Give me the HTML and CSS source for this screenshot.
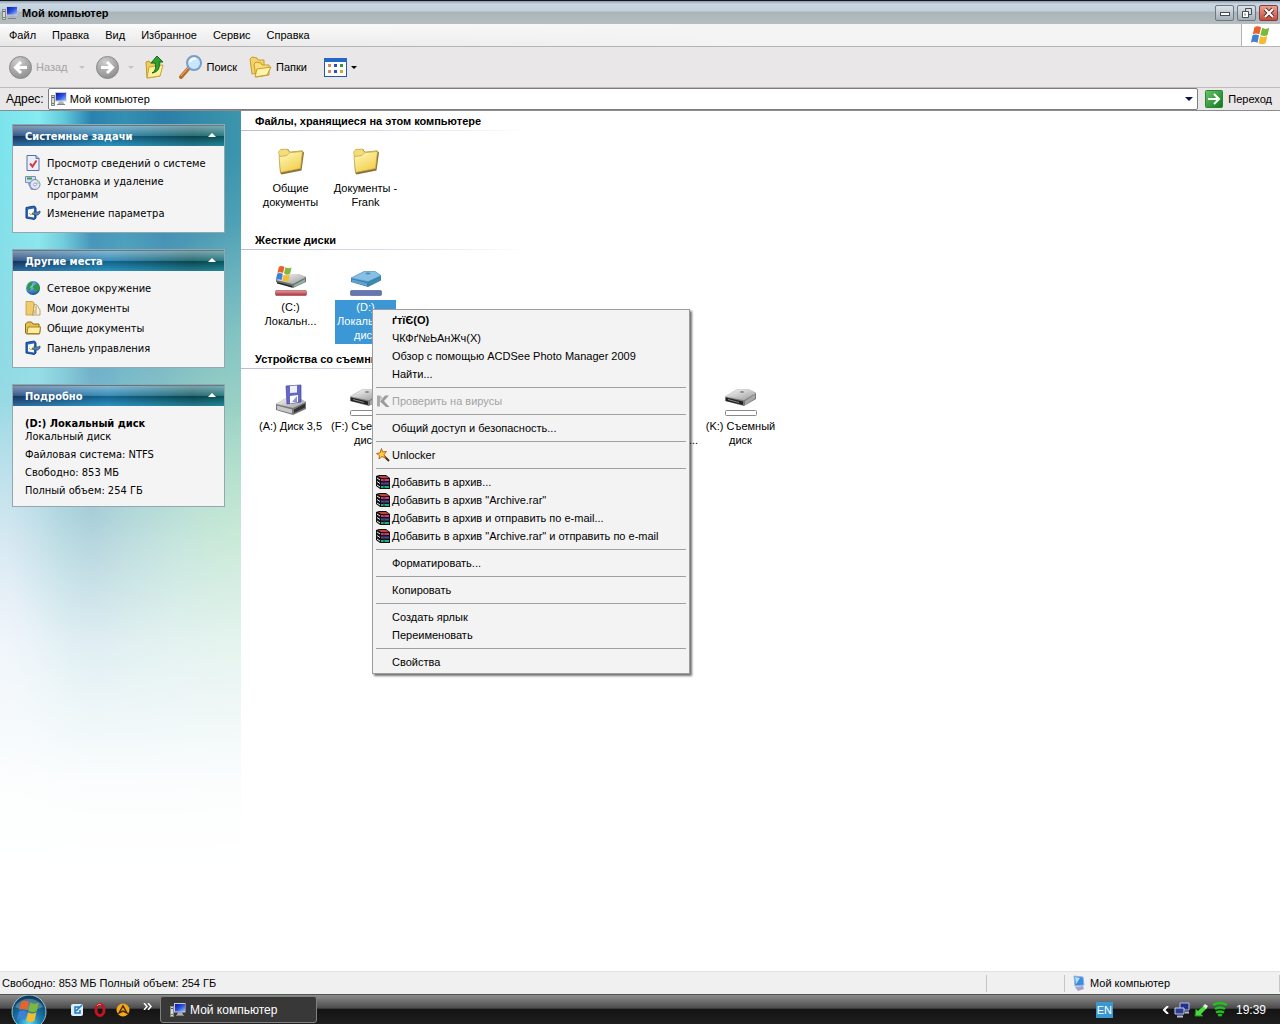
FILE: index.html
```html
<!DOCTYPE html>
<html lang="ru">
<head>
    <meta charset="UTF-8">
    <meta name="viewport" content="width=device-width, initial-scale=1.0">
    <title>Мой компьютер</title>
    <link rel="stylesheet" href="styles.css">
</head>
<body>
    <!-- Shared icons -->
    <svg class="sprite" aria-hidden="true">
        <defs>
            <linearGradient id="gFolder" x1="0" y1="0" x2="0.6" y2="1"><stop offset="0" stop-color="#fffbc0"/><stop offset="1" stop-color="#f3cf4e"/></linearGradient>
            <linearGradient id="gScreen" x1="0" y1="0" x2="1" y2="1"><stop offset="0" stop-color="#0818a0"/><stop offset="0.5" stop-color="#2a50e0"/><stop offset="1" stop-color="#9cc4ff"/></linearGradient>
            <linearGradient id="gMetal" x1="0" y1="0" x2="1" y2="1"><stop offset="0" stop-color="#fafafa"/><stop offset="1" stop-color="#9a9a9a"/></linearGradient>
            <linearGradient id="gRed" x1="0" y1="0" x2="0" y2="1"><stop offset="0" stop-color="#e89a9e"/><stop offset="1" stop-color="#b02c38"/></linearGradient>
            <linearGradient id="gGreen" x1="0" y1="0" x2="1" y2="1"><stop offset="0" stop-color="#6cc46a"/><stop offset="1" stop-color="#0c7a1c"/></linearGradient>
            <radialGradient id="gGrey" cx="0.4" cy="0.25" r="0.8"><stop offset="0" stop-color="#cfcfcf"/><stop offset="1" stop-color="#8b8b8b"/></radialGradient>
            <radialGradient id="gOrb" cx="0.5" cy="0.85" r="0.85"><stop offset="0" stop-color="#5fe0f8"/><stop offset="0.4" stop-color="#1c7cb0"/><stop offset="1" stop-color="#0b3656"/></radialGradient>
            <radialGradient id="gGlobe" cx="0.35" cy="0.3" r="0.8"><stop offset="0" stop-color="#8fd0ff"/><stop offset="1" stop-color="#0a3f9c"/></radialGradient>
        </defs>
        <symbol id="computer" viewBox="0 0 16 16">
            <rect x="0.5" y="4.5" width="3" height="10" fill="#d8d8d8" stroke="#8a8a8a"/>
            <path d="M1 6.5h2" stroke="#555"/><path d="M1 12.5h2" stroke="#3a3"/>
            <path d="M4 1h11.500v9.500h-11.500z" fill="#c9c9d4"/>
            <path d="M5 2h10v7.500h-10z" fill="url(#gScreen)"/>
            <path d="M8 10.500h4l1.500 3h-7z" fill="#b0b0b8"/><path d="M6 13.500h8" stroke="#808088"/>
        </symbol>
        <symbol id="flag" viewBox="0 0 20 18">
            <path d="M4 2c2-1.500 4-1 6 0l-1.500 6.500c-2-1-4-1.500-6 0z" fill="#e8622c"/>
            <path d="M11 2.500c2 1 4 1.500 6.500 0l-1.500 6.500c-2 1.500-4 1-6.500 0z" fill="#7cb83c"/>
            <path d="M2.200 9.500c2-1.500 4-1 6 0l-1.400 6.500c-2-1-4-1.500-6 0z" fill="#3f7fd6"/>
            <path d="M9.200 10c2 1 4 1.500 6.500 0l-1.500 6.500c-2 1.500-4 1-6.400 0z" fill="#f5bd2e"/>
        </symbol>
        <symbol id="folder" viewBox="0 0 32 32">
            <path d="M4 6l2-2.500 7-.5 2 3 12-1.500 2 2-2.500 18-20 4-1.500-2z" fill="#8a7038"/>
            <path d="M3.500 6l2-2.500 6.500-.5 2.500 3 12-1v3l-22 3z" fill="#f3dc7a" stroke="#c6a440" stroke-width="0.600"/>
            <path d="M4 10.500l7.500-.8 3-3 13-1.200-2 17-20 4z" fill="url(#gFolder)" stroke="#c6a440" stroke-width="0.700"/>
        </symbol>
        <symbol id="folderSmall" viewBox="0 0 16 16">
            <path d="M0.500 13V4l2-2h4l1.500 2H14v3h1.500l-1 7H2z" fill="#e8c04c" stroke="#8c6c18"/>
            <path d="M3 7h12.500l-1 6.500H2z" fill="#ffee9c" stroke="#a8842c"/>
        </symbol>
        <symbol id="myDocs" viewBox="0 0 16 16">
            <path d="M1 1.500h6l2 1v12.500H1z" fill="#f0cc6c" stroke="#c09a3c" stroke-width="0.800"/>
            <path d="M9.500 4l2.500 1 3 5v5H7.500z" fill="#f6f2e4" stroke="#a88c50" stroke-width="0.800"/>
            <path d="M11 6v8M9 10v4" stroke="#c09a3c"/>
        </symbol>
        <symbol id="globe" viewBox="0 0 16 16">
            <circle cx="8" cy="8" r="7" fill="url(#gGlobe)"/>
            <path d="M3 4c2-2.500 4-2.500 5-2l-1 3-2 2 1 2-2 2-2-3zM9 5l4-1 1.500 4-2 4-3 1 0-4-2-2z" fill="#2f9c3c"/>
        </symbol>
        <symbol id="control" viewBox="0 0 16 16">
            <path d="M1 2.500L9.500 1l1.500 2v10l-1.500 1.500L1 13z" fill="#2a66b8" stroke="#173f80"/>
            <path d="M3 4.500l6-1v9l-6-1z" fill="#f2f8ff"/>
            <path d="M4 8l2 2 3-4" fill="none" stroke="#e2b028"/>
            <path d="M7 9l3-2h3l2-1v2l-2 2h-3z" fill="#5c84b4" stroke="#204870" stroke-width="0.700"/>
        </symbol>
        <symbol id="sysInfo" viewBox="0 0 16 16">
            <path d="M2 .5h9l3 3v12H2z" fill="#e8f0ff" stroke="#5a70a4"/>
            <path d="M11 .5v3h3" fill="#b8c8e8" stroke="#5a70a4"/>
            <path d="M5 8.500l2.500 3 4-6" fill="none" stroke="#e03838" stroke-width="2"/>
        </symbol>
        <symbol id="programs" viewBox="0 0 16 16">
            <path d="M0.500 1.500h10v6H0.500z" fill="#cfe0f4" stroke="#7890b8"/><path d="M2 3.500h5" stroke="#3c9c4c" stroke-width="2"/>
            <path d="M2 7l4 8 5 0-3-8z" fill="#8ca4cc"/>
            <circle cx="10" cy="9.500" r="5" fill="#e4e4f6" stroke="#7c84ac"/>
            <path d="M10 9.500l3-4a5 5 0 0 1 1.600 3z" fill="#a4e0b0"/><circle cx="10" cy="9.500" r="1.400" fill="#fff" stroke="#7c84ac" stroke-width="0.700"/>
        </symbol>
        <symbol id="drive" viewBox="0 0 32 20">
            <path d="M0 8L12 1h12l7 3v6l-12 7L0 12z" fill="#777"/>
            <path d="M0 7.500L12 .5h12l7 3.500-12 7z" fill="url(#gMetal)" stroke="#bbb" stroke-width="0.500"/>
            <path d="M1 8.500l17 4v3.500L1 12z" fill="#222"/><path d="M20 12l10-6.500v4l-10 6.500z" fill="#a8a8a8"/>
            <path d="M3 10.500l11 3" stroke="#888"/><ellipse cx="17" cy="3" rx="2" ry="1" fill="#888"/>
        </symbol>
        <symbol id="diskC" viewBox="0 0 32 32">
            <path d="M1 15L12 9h11l8 3v5l-13 6-17-6z" fill="#6c7270"/>
            <path d="M1 15L12 9h11l8 3-13 7z" fill="url(#gMetal)"/>
            <path d="M2 17l15 4v1.500L2 18.500z" fill="#222"/><path d="M19 20l11-6v3l-11 5z" fill="#8ab4a0"/>
            <use href="#flag" x="0" y="0" width="19" height="17"/>
            <rect x="0.500" y="25.500" width="31" height="5" rx="1" fill="url(#gRed)" stroke="#8c5054" stroke-width="0.600"/>
        </symbol>
        <symbol id="diskD" viewBox="0 0 32 32">
            <path d="M1 13L14 6.500h11l6 4v5l-13 6.500-17-5z" fill="#3c7eae"/>
            <path d="M1 13L14 6.500h11l6 4-13 6z" fill="#86c0e4" stroke="#5a9cc8" stroke-width="0.600"/>
            <path d="M2 14.500l15 3.500v3L2 17z" fill="#5ca4d0"/><path d="M19 18l11-6v3l-11 6z" fill="#3a8eac"/>
            <ellipse cx="18" cy="8.500" rx="2.500" ry="1" fill="#4c8cb8"/>
            <rect x="0.500" y="25.500" width="31" height="5" rx="1" fill="#6478b0" stroke="#4a5890" stroke-width="0.600"/>
        </symbol>
        <symbol id="floppy" viewBox="0 0 32 32">
            <path d="M1 20L11 14h13l7 4v7l-13 6-17-5z" fill="#777"/>
            <path d="M1 20L11 14h13l7 4-13 6z" fill="url(#gMetal)"/>
            <path d="M2 21.500l15 4v4L2 25.500z" fill="#c8c8c8"/><path d="M19 25.500l11-6v4l-11 5.500z" fill="#333"/>
            <path d="M11 2l15-1v17l-14 2z" fill="#6468c4" stroke="#4444a0" stroke-width="0.700"/>
            <path d="M15 2l7-.5v7l-7 .5z" fill="#f0f0f8"/><path d="M15 12l8-1v7l-8 1.500z" fill="#fff"/><path d="M17 18l5-6v6z" fill="#8c90d8"/>
        </symbol>
        <symbol id="removable" viewBox="0 0 32 32">
            <use href="#drive" x="0" y="5" width="32" height="20"/>
            <rect x="0.500" y="26.500" width="31" height="5" rx="1" fill="#fff" stroke="#888"/>
        </symbol>
        <symbol id="rar" viewBox="0 0 14 14">
            <path d="M0 1l3-1h7l4 3v11H4L0 11z" fill="#111"/>
            <path d="M2 1h8l3 2H5z" fill="#b84838"/><path d="M5 4h8v2H5z" fill="#e0307c"/>
            <path d="M5 7.500h8v2H5z" fill="#3c50a8"/><path d="M5 11h8v2H5z" fill="#18b07c"/>
            <path d="M1 3l3 2M1 6.500l3 2M1 10l3 2" stroke="#eee"/><path d="M8 3v10" stroke="#502028" stroke-width="1"/>
        </symbol>
        <symbol id="wand" viewBox="0 0 14 14">
            <path d="M7 7l6 6" stroke="#4c2c08" stroke-width="2"/>
            <path d="M5.500 0.500l1 3.500 4-.5-2.500 3 1.500 3.500-3.500-1.500-3 2.500.5-3.500-3-2 3.500-.5z" fill="#ffd23c" stroke="#c8601c"/>
        </symbol>
        <symbol id="antivirus" viewBox="0 0 14 14">
            <path d="M1 1.500h3v11H1z" fill="#aaa"/><path d="M4 7.500l5-6h4L8 7l5.500 6H10z" fill="#9c9c9c"/><path d="M4 1.500l3 2-3 3z" fill="#c4c4c4"/>
        </symbol>
        <symbol id="monitors" viewBox="0 0 16 16">
            <path d="M6 1h9v7H6z" fill="#24308c" stroke="#b4bce4"/><path d="M1 6h9v6H1z" fill="#2c3c94" stroke="#c4ccec"/><path d="M3 14.500h6M11 10.500h4" stroke="#b4bce4" stroke-width="2"/>
        </symbol>
    </svg>

    <header class="title-bar">
        <svg class="icon16"><use href="#computer"/></svg>
        <h1 class="window-title">Мой компьютер</h1>
        <div class="window-buttons">
            <button class="win-btn" aria-label="Свернуть"><svg width="18" height="14"><rect x="4.500" y="6.500" width="9" height="3" fill="#fff" stroke="#444c58"/></svg></button>
            <button class="win-btn" aria-label="Восстановить"><svg width="18" height="14"><path d="M7.500 2.500h6v6h-6z" fill="#ddd" stroke="#444c58"/><path d="M4.500 5.500h6v6h-6z" fill="#fff" stroke="#444c58"/><path d="M7 7.500v2" stroke="#444c58"/></svg></button>
            <button class="win-btn close-btn" aria-label="Закрыть"><svg width="18" height="14"><path d="M5 3l8 8M13 3l-8 8" stroke="#5a3030" stroke-width="4"/><path d="M5 3l8 8M13 3l-8 8" stroke="#fff" stroke-width="2"/></svg></button>
        </div>
    </header>

    <nav class="menu-bar">
        <button>Файл</button>
        <button>Правка</button>
        <button>Вид</button>
        <button>Избранное</button>
        <button>Сервис</button>
        <button>Справка</button>
        <div class="brand"><svg width="22" height="20"><use href="#flag"/></svg></div>
    </nav>

    <div class="toolbar">
        <button class="tool" disabled>
            <svg width="23" height="23"><circle cx="11.500" cy="11.500" r="11" fill="url(#gGrey)" stroke="#8c8c8c"/><path d="M18 11.500H7M12 6l-5.500 5.500L12 17" fill="none" stroke="#fff" stroke-width="3"/></svg>
            Назад
        </button>
        <button class="drop" disabled aria-label="История назад"><span class="arrow"></span></button>
        <button class="tool" disabled aria-label="Вперед">
            <svg width="23" height="23"><circle cx="11.500" cy="11.500" r="11" fill="url(#gGrey)" stroke="#8c8c8c"/><path d="M5 11.500h11M11 6l5.500 5.500L11 17" fill="none" stroke="#fff" stroke-width="3"/></svg>
        </button>
        <button class="drop short" disabled aria-label="История вперед"><span class="arrow"></span></button>
        <button class="tool up-btn" aria-label="Вверх">
            <svg width="22" height="24"><path d="M2 7l3-1 1 2 10-1v14L3 23z" fill="#efcf5c" stroke="#c09628"/><path d="M5 12l14-2-3 11-13 2z" fill="#fff09c" stroke="#c8a438"/><path d="M8 18c4-2 4-6 3-10H7l6-7 6 6h-4c1 5 0 10-7 11z" fill="#30a030" stroke="#116c18"/></svg>
        </button>
        <button class="tool search-btn">
            <svg width="24" height="24"><path d="M9 14l-7 8" stroke="#b86c28" stroke-width="4" stroke-linecap="round"/><path d="M9 13l-7 8" stroke="#f0b878" stroke-width="1"/><circle cx="15" cy="8" r="7" fill="#c8e6fc" stroke="#7c9cc8" stroke-width="2"/><path d="M11 7c1-3 4-4 6-3" fill="none" stroke="#fff" stroke-width="2"/></svg>
            Поиск
        </button>
        <button class="tool folders-btn">
            <svg width="23" height="22"><path d="M1 3l2-2 5 1 1 2 6 0v12l-12 2z" fill="#f4d468" stroke="#c89a30"/><path d="M5 8l2-2 5 1 1 2 7 0v10l-13 2z" fill="#f9e07c" stroke="#c89a30"/><path d="M8 13l14-2-4 8-12 2z" fill="#fff4a8" stroke="#c89a30"/></svg>
            Папки
        </button>
        <button class="tool views-btn" aria-label="Вид">
            <svg width="23" height="19"><rect x="0.500" y="0.500" width="22" height="18" fill="#fff" stroke="#1c5cac"/><path d="M0 2h23" stroke="#2468c4" stroke-width="4"/><path d="M4 7.500h3M4 13.500h3" stroke="#d88860" stroke-width="3"/><path d="M10 7.500h3M10 13.500h3" stroke="#2c50c0" stroke-width="3"/><path d="M16 7.500h3" stroke="#389838" stroke-width="3"/><path d="M16 13.500h3" stroke="#c8a838" stroke-width="3"/></svg>
            <span class="arrow"></span>
        </button>
    </div>

    <form class="address-bar">
        <label for="address">Адрес:</label>
        <div class="address-box">
            <svg class="icon16"><use href="#computer"/></svg>
            <input type="text" id="address" value="Мой компьютер">
            <button type="button" class="address-drop" aria-label="Список адресов"><span class="arrow big"></span></button>
        </div>
        <button type="button" class="go-btn">
            <svg width="18" height="18"><rect x="0.500" y="0.500" width="17" height="17" rx="1" fill="url(#gGreen)" stroke="#2c8434"/><path d="M3 9h10M9 4l5 5-5 5" fill="none" stroke="#fff" stroke-width="2"/></svg>
            Переход
        </button>
    </form>

    <div class="explorer">
        <aside class="sidebar">
            <section class="panel">
                <h2>Системные задачи<span class="collapse"></span></h2>
                <ul>
                    <li><a href="#"><svg class="icon16"><use href="#sysInfo"/></svg>Просмотр сведений о системе</a></li>
                    <li><a href="#"><svg class="icon16"><use href="#programs"/></svg>Установка и удаление<br>программ</a></li>
                    <li><a href="#"><svg class="icon16"><use href="#control"/></svg>Изменение параметра</a></li>
                </ul>
            </section>
            <section class="panel">
                <h2>Другие места<span class="collapse"></span></h2>
                <ul>
                    <li><a href="#"><svg class="icon16"><use href="#globe"/></svg>Сетевое окружение</a></li>
                    <li><a href="#"><svg class="icon16"><use href="#myDocs"/></svg>Мои документы</a></li>
                    <li><a href="#"><svg class="icon16"><use href="#folderSmall"/></svg>Общие документы</a></li>
                    <li><a href="#"><svg class="icon16"><use href="#control"/></svg>Панель управления</a></li>
                </ul>
            </section>
            <section class="panel">
                <h2>Подробно<span class="collapse"></span></h2>
                <div class="details">
                    <p><strong>(D:) Локальный диск</strong><br>Локальный диск</p>
                    <p>Файловая система: NTFS</p>
                    <p>Свободно: 853 МБ</p>
                    <p>Полный объем: 254 ГБ</p>
                </div>
            </section>
        </aside>

        <main class="content">
            <section class="group">
                <h2>Файлы, хранящиеся на этом компьютере</h2>
                <div class="items">
                    <a class="item" href="#"><svg><use href="#folder"/></svg><span>Общие<br>документы</span></a>
                    <a class="item" href="#"><svg><use href="#folder"/></svg><span>Документы -<br>Frank</span></a>
                </div>
            </section>
            <section class="group">
                <h2>Жесткие диски</h2>
                <div class="items">
                    <a class="item" href="#"><svg><use href="#diskC"/></svg><span>(C:)<br>Локальн...</span></a>
                    <a class="item selected" href="#"><svg><use href="#diskD"/></svg><span>(D:)<br>Локальный<br>диск</span></a>
                </div>
            </section>
            <section class="group">
                <h2>Устройства со съемными носителями</h2>
                <div class="items">
                    <a class="item" href="#"><svg><use href="#floppy"/></svg><span>(A:) Диск 3,5</span></a>
                    <a class="item" href="#"><svg><use href="#removable"/></svg><span>(F:) Съемный<br>диск</span></a>
                    <a class="item" href="#"><svg><use href="#removable"/></svg><span>(G:)<br>Съемный</span></a>
                    <a class="item" href="#"><svg><use href="#removable"/></svg><span>(H:)<br>Съемный</span></a>
                    <a class="item" href="#"><svg><use href="#removable"/></svg><span>(I:)<br>Съемный</span></a>
                    <a class="item" href="#"><svg><use href="#drive"/></svg><span>(J:)<br>DVD-диско...</span></a>
                    <a class="item" href="#"><svg><use href="#removable"/></svg><span>(K:) Съемный<br>диск</span></a>
                </div>
            </section>

            <!-- Context menu of the selected drive -->
            <div class="context-menu">
                <button><strong>ґтїЄ(O)</strong></button>
                <button>ЧКФґ№ЬАнЖч(X)</button>
                <button>Обзор с помощью ACDSee Photo Manager 2009</button>
                <button>Найти...</button>
                <hr>
                <button disabled><svg><use href="#antivirus"/></svg>Проверить на вирусы</button>
                <hr>
                <button>Общий доступ и безопасность...</button>
                <hr>
                <button><svg><use href="#wand"/></svg>Unlocker</button>
                <hr>
                <button><svg><use href="#rar"/></svg>Добавить в архив...</button>
                <button><svg><use href="#rar"/></svg>Добавить в архив "Archive.rar"</button>
                <button><svg><use href="#rar"/></svg>Добавить в архив и отправить по e-mail...</button>
                <button><svg><use href="#rar"/></svg>Добавить в архив "Archive.rar" и отправить по e-mail</button>
                <hr>
                <button>Форматировать...</button>
                <hr>
                <button>Копировать</button>
                <hr>
                <button>Создать ярлык</button>
                <button>Переименовать</button>
                <hr>
                <button>Свойства</button>
            </div>
        </main>
    </div>

    <div class="status-bar">
        <div class="status-text">Свободно: 853 МБ Полный объем: 254 ГБ</div>
        <div class="status-empty"></div>
        <div class="status-zone">
            <svg width="14" height="16"><path d="M2 1l9 1 1 8-9 1z" fill="#3c8ce4" stroke="#8cb4dc"/><path d="M3 2l5 1-4 6z" fill="#b4e0ff"/><path d="M3 12l8-1 1 3-6 2z" fill="#a4a0d0"/></svg>
            Мой компьютер
        </div>
    </div>

    <footer class="taskbar">
        <button class="start" aria-label="Пуск">
            <svg width="36" height="29"><circle cx="18" cy="17" r="17" fill="url(#gOrb)" stroke="#9cc4d0"/><path d="M4 12a15 13 0 0 1 28 0c-8 4-20 4-28 0z" fill="#fff" fill-opacity="0.250"/><use href="#flag" x="5" y="4" width="26" height="24"/></svg>
        </button>
        <div class="quick-launch">
            <button aria-label="Почта"><svg width="14" height="14"><rect x="1" y="1" width="12" height="12" rx="2" fill="#dceefa"/><path d="M10 4H5v6h5V7M6 8l6-6" fill="none" stroke="#1c7cc0" stroke-width="1.500"/></svg></button>
            <button aria-label="Opera"><svg width="14" height="14"><ellipse cx="7" cy="7" rx="4" ry="5.500" fill="none" stroke="#c41420" stroke-width="3"/><path d="M4 3c1-2 3-2 4-1" fill="none" stroke="#f49090"/></svg></button>
            <button aria-label="AIMP"><svg width="14" height="14"><circle cx="7" cy="7" r="6.500" fill="#f4a81c"/><path d="M3 10l4-7 4 7-4-2z" fill="none" stroke="#4c2c00" stroke-width="1.500"/></svg></button>
            <button class="more" aria-label="Еще"><svg width="9" height="7"><path d="M1 0l3 3.500-3 3.500M5 0l3 3.500-3 3.500" fill="none" stroke="#fff" stroke-width="1.500"/></svg></button>
        </div>
        <button class="task"><svg class="icon16"><use href="#computer"/></svg>Мой компьютер</button>
        <div class="tray">
            <button class="lang">EN</button>
            <button class="tray-toggle" aria-label="Показать значки"><svg width="7" height="8"><path d="M6 0L2 4l4 4" fill="none" stroke="#fff" stroke-width="2"/></svg></button>
            <svg class="icon16"><use href="#monitors"/></svg>
            <svg width="14" height="14"><path d="M1 13l1-7 2 2 6-6 3 3-6 6 2 2z" fill="#4cd83c" stroke="#1c8c1c"/><path d="M9 3l2-2 3 2-2 3z" fill="#e8ece8"/></svg>
            <svg width="16" height="16"><path d="M1 3q7-4 14 0M3 7q5-3 10 0M4 10.500q4-2 8 0M6 13.500q2-1 4 0" fill="none" stroke="#1cc41c" stroke-width="2.500"/></svg>
            <time>19:39</time>
        </div>
    </footer>
</body>
</html>
```

FILE: styles.css
```css
* { margin: 0; padding: 0; box-sizing: border-box; }
body { font-family: "Liberation Sans", Arial, sans-serif; font-size: 11px; line-height: 14px; color: #000; background: #fff; display: flex; flex-direction: column; min-height: 100vh; }
button, input { font: inherit; color: inherit; background: none; border: none; }
button { display: flex; align-items: center; white-space: nowrap; }
a { color: inherit; text-decoration: none; }
ul { list-style: none; }
svg { flex: none; display: block; }
.sprite { position: absolute; width: 0; height: 0; }
.icon16 { width: 16px; height: 16px; }

/* Title bar */
.title-bar { display: flex; align-items: center; height: 24px; padding: 0 2px; gap: 4px; border-top: 1px solid #14161f; background: linear-gradient(#8f9cab 0, #c9d7e3 3px, #c3d0da 10px, #a9b5bb 11px, #b6bdc0 100%); }
.window-title { flex: 1; font-size: 11px; }
.window-buttons { display: flex; gap: 3px; }
.win-btn { width: 19px; height: 16px; justify-content: center; border: 1px solid #6c7884; border-radius: 2px; background: linear-gradient(#dde3e8, #a4afb8); }
.close-btn { border-color: #7c4040; background: linear-gradient(#eda090, #c84c38); }

/* Menu and toolbar */
.menu-bar { display: flex; align-items: center; height: 23px; padding-left: 9px; gap: 16px; border-bottom: 1px solid #b4b4b4; background: linear-gradient(90deg, rgba(255, 255, 255, 0), #f4f4f4 60%), linear-gradient(#fdfdfd, #e6e6e6); }
.brand { margin-left: auto; align-self: stretch; width: 39px; display: flex; align-items: center; justify-content: center; border-left: 1px solid #b4b4b4; background: #fff; }
.toolbar { display: flex; align-items: center; height: 41px; padding-left: 9px; border-bottom: 1px solid #bcbcbc; background: #e9e7e7; }
.tool { gap: 4px; }
.tool:disabled { color: #a4a4a4; }
.drop { width: 28px; height: 24px; justify-content: center; }
.drop.short { width: 25px; }
.arrow { border: 3px solid transparent; border-top-color: #000; border-bottom: none; }
.arrow.big { border-width: 4px; border-bottom: none; border-top-color: #101050; }
.drop .arrow { border-top-color: #c4c4c4; }
.up-btn { margin-right: 13px; }
.search-btn { margin-right: 12px; }
.folders-btn { margin-right: 17px; }

/* Address bar */
.address-bar { display: flex; align-items: center; height: 23px; padding: 0 8px 0 6px; gap: 4px; background: #e9e7e7; border-bottom: 1px solid #8c8c8c; }
.address-bar label { font-size: 12px; }
.address-box { flex: 1; display: flex; align-items: center; height: 22px; padding: 0 4px 0 2px; gap: 3px; border: 1px solid #7c7c84; border-radius: 2px; background: #fff; }
.address-box input { flex: 1; min-width: 0; outline: none; }
.go-btn { gap: 5px; padding-left: 3px; }

/* Explorer */
.explorer { flex: 1; display: flex; }
.sidebar { width: 241px; flex: none; padding: 13px 16px 16px 12px; display: flex; flex-direction: column; gap: 16px; font-family: "DejaVu Sans Condensed", Tahoma, sans-serif; line-height: 13px;
    background:
        linear-gradient(rgba(255, 255, 255, 0) 0, rgba(255, 255, 255, 0) 34%, rgba(255, 255, 255, 0.3) 48%, rgba(255, 255, 255, 0.7) 62%, rgba(255, 255, 255, 0.96) 78%, #fff 88%),
        radial-gradient(ellipse 150px 320px at 100% 50%, rgba(175, 225, 190, 0.9), rgba(175, 225, 190, 0)),
        radial-gradient(ellipse 90px 200px at 40% 48%, rgba(125, 175, 190, 0.5), rgba(125, 175, 190, 0)),
        radial-gradient(ellipse 70px 260px at 0 62%, rgba(215, 225, 245, 0.9), rgba(215, 225, 245, 0)),
        linear-gradient(rgba(160, 212, 222, 0) 5%, rgba(160, 212, 222, 0.55) 28%, rgba(168, 212, 222, 0.9) 50%),
        linear-gradient(90deg, #7ce2ec 0, #86ecf2 16%, #64cbdc 26%, #2b82b0 38%, #3390b2 52%, #2c7fa8 68%, #3c96ac 100%); }
.panel { border: 1px solid #93a8ae; background: #f4f4f4; }
.panel h2 { display: flex; align-items: center; justify-content: space-between; height: 21px; padding: 0 8px 0 12px; font-size: 11px; color: #fff; border-top: 1px solid #5c7c88;
    background:
        linear-gradient(rgba(255, 255, 255, 0.45), rgba(255, 255, 255, 0.12) 50%, rgba(0, 0, 0, 0.2) 52%, rgba(80, 190, 230, 0.35) 100%),
        linear-gradient(90deg, #1c4076, #1a7cae 45%, #0c5660 85%, #0c6870); }
.collapse { margin-bottom: 3px; border: 4px solid transparent; border-bottom-color: #fff; border-top: none; }
.panel ul { padding: 9px 12px 11px; display: flex; flex-direction: column; gap: 4px; }
.panel li a { display: grid; grid-template-columns: 16px 1fr; column-gap: 6px; min-height: 16px; align-items: center; white-space: nowrap; }
.panel li svg { align-self: start; }
.details { padding: 11px 12px 9px; display: flex; flex-direction: column; gap: 5px; }

.content { flex: 1; position: relative; }
.group { height: 119px; }
.group h2 { height: 20px; padding-left: 14px; font-size: 11px; line-height: 20px; border-bottom: 1px solid; border-image: linear-gradient(90deg, #b8bcd8, #fff 290px) 1; }
.items { display: flex; padding: 15px 0 0 12px; }
.item { width: 75px; display: flex; flex-direction: column; align-items: center; gap: 3px; text-align: center; white-space: nowrap; }
.item svg { width: 32px; height: 32px; }
.item span { padding: 0 2px 2px; }
.selected span { color: #fff; background: #3b97d5; }

/* Context menu */
.context-menu { position: absolute; left: 131px; top: 198px; width: 318px; padding: 1px 3px 2px; border: 1px solid #9c9c9c; background: #f3f3f3; box-shadow: 2px 2px 2px rgba(0, 0, 0, 0.55); }
.context-menu button { position: relative; width: 100%; height: 18px; padding-left: 16px; }
.context-menu button:disabled { color: #a4a4a4; }
.context-menu svg { position: absolute; left: 0; top: 2px; width: 14px; height: 14px; }
.context-menu hr { height: 1px; margin: 4px 0; border: none; background: #a0a0a0; }

/* Status bar */
.status-bar { display: flex; align-items: center; height: 23px; padding: 3px 0; border-top: 1px solid #e0e0e0; background: #f0f0f0; }
.status-bar div { height: 17px; display: flex; align-items: center; gap: 4px; border-right: 1px solid #c4c4c4; }
.status-text { flex: 1; padding-left: 2px; }
.status-empty { width: 78px; }
.status-zone { width: 215px; padding-left: 7px; }

/* Taskbar */
.taskbar { display: flex; align-items: center; height: 30px; padding: 0 14px 0 11px; color: #fff; border-top: 1px solid #4c564c; background: linear-gradient(#8c8c8c, #4c4c4c 45%, #141414 50%, #1e1e1e); }
.quick-launch { display: flex; align-items: center; gap: 9px; margin: 0 8px 0 23px; }
.quick-launch .more { align-self: flex-start; padding: 0 0 7px 4px; }
.task { width: 157px; height: 27px; padding-left: 9px; gap: 4px; font-size: 12px; border: 1px solid #808080; border-radius: 3px; background: #383838; }
.tray { display: flex; align-items: center; gap: 4px; margin-left: auto; font-size: 12px; }
.lang { height: 16px; padding: 0 1px; margin-right: 45px; font-size: 11px; background: #3b97d0; }
.tray-toggle { padding-right: 1px; }
.tray time { margin-left: 4px; }
```
